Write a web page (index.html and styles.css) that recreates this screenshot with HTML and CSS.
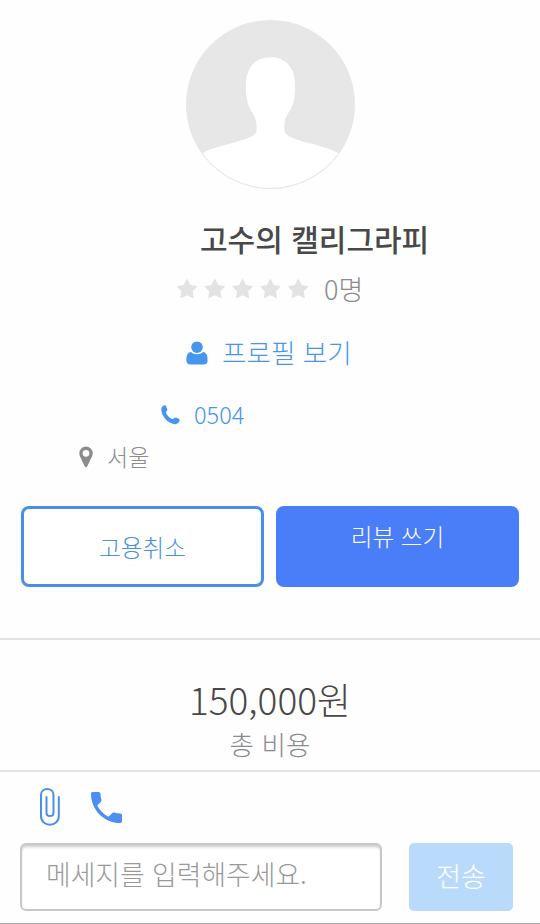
FILE: index.html
```html
<!DOCTYPE html>
<html lang="ko">
<head>
    <meta charset="UTF-8">
    <title>고수의 캘리그라피</title>
    <link rel="stylesheet" href="styles.css">
</head>
<body>
    <section class="profile">
        <svg class="avatar" viewBox="0 0 168 168">
            <circle cx="84" cy="84" r="84" fill="#e7e7e7"/>
            <path d="M16.500 132.500C31 123 66 121 70 111C71 102 69 97 66 92C61 85 59.500 76 59.500 65C59.500 47 69 37 84 37C99 37 108.500 47 108.500 65C108.500 76 107 85 102 92C99 97 97 102 98 111C102 121 137 123 151.500 132.500A83.500 83.500 0 0 1 16.500 132.500Z" fill="#fff"/>
        </svg>
        <h1 class="name">고수의 캘리그라피</h1>
        <div class="rating">
            <svg class="stars" viewBox="0 0 134 22" fill="#e3e3e3">
                <defs>
                    <path id="star" d="M11 0.500L14.500 7L21.500 8.200L16.600 13.300L17.700 20.500L11 17.300L4.300 20.500L5.400 13.300L0.500 8.200L7.500 7Z"/>
                </defs>
                <use href="#star"/>
                <use href="#star" x="27.800"/>
                <use href="#star" x="55.600"/>
                <use href="#star" x="83.400"/>
                <use href="#star" x="111.200"/>
            </svg>
            <span>0명</span>
        </div>
        <a class="link view">
            <svg width="22" height="24" viewBox="0 0 22 24" fill="#4796ee">
                <circle cx="11" cy="6.200" r="5.800"/>
                <path d="M5 11C8 13.900 14 13.900 17 11C20.500 11.400 21.600 14.500 21.600 19.500C21.600 22 20 23.500 17.500 23.500H4.500C2 23.500 0.400 22 0.400 19.500C0.400 14.500 1.500 11.400 5 11Z"/>
            </svg>
            <span>프로필 보기</span>
        </a>
        <a class="link phone">
            <svg width="19" height="20" viewBox="0 0 19 20" fill="#4796ee">
                <path d="M0.300 4C0.500 1.500 2.500 0 4.500 0.200C5.200 1.500 6.300 3.500 6.300 4.800C6.300 6.100 4.800 6.500 5 7.700C6 10.200 8.500 12.900 11.200 13.900C12.500 14.100 13 12.400 14.500 12.400C15.700 12.600 18 13.800 18.700 14.600C18.700 17 17 18.900 14.800 19.200C7.500 19.500 0 11 0.300 4Z"/>
            </svg>
            <span>0504</span>
        </a>
        <div class="place">
            <svg width="14" height="22" viewBox="0 0 14 22">
                <path d="M7 0.500A6.700 6.700 0 0 0 0.300 7.200C0.300 9.500 1.400 11 2 12.500L5.700 20.200Q7 22.500 8.300 20.200L12 12.500C12.600 11 13.700 9.500 13.700 7.200A6.700 6.700 0 0 0 7 0.500ZM7 3.900A3.400 3.400 0 1 1 7 10.700A3.400 3.400 0 0 1 7 3.900Z" fill="#8c8c8c"/>
            </svg>
            <span>서울</span>
        </div>
        <div class="actions">
            <button class="btn cancel">고용취소</button>
            <button class="btn review">리뷰 쓰기</button>
        </div>
    </section>

    <section class="cost">
        <div class="price">150,000원</div>
        <div class="caption">총 비용</div>
    </section>

    <footer class="chat">
        <div class="tools">
            <svg width="20" height="38" viewBox="0 0 20 38" fill="none" stroke="#4b8fe8" stroke-width="2" stroke-linecap="round">
                <path d="M6.500 9V24.500C6.500 29.300 13.500 29.300 13.500 24.500V7C13.500 -0.900 1 -0.900 1 7V28C1 39.500 18.800 39.500 18.800 28V9"/>
            </svg>
            <svg width="31" height="31" viewBox="3 3 18 18" fill="#4b8ff2">
                <path d="M6.620 10.790c1.440 2.830 3.760 5.140 6.590 6.590l2.200-2.200c.27-.27.67-.36 1.020-.24 1.120.37 2.330.57 3.570.57.55 0 1 .45 1 1V20c0 .55-.45 1-1 1-9.390 0-17-7.610-17-17 0-.55.45-1 1-1h3.500c.55 0 1 .45 1 1 0 1.250.2 2.450.57 3.570.11.35.03.74-.25 1.020l-2.200 2.200z"/>
            </svg>
        </div>
        <div class="compose">
            <input class="message" type="text" placeholder="메세지를 입력해주세요.">
            <button class="send">전송</button>
        </div>
    </footer>
</body>
</html>
```
FILE: styles.css
```css
* {
    box-sizing: border-box;
}

body {
    margin: 0;
    height: 924px;
    display: flex;
    flex-direction: column;
    overflow: hidden;
    background-color: #fefefe;
    color: #484848;
    font-family: "Noto Sans CJK KR", sans-serif;
    font-weight: 300;
}

button, input {
    font-family: inherit;
    font-weight: inherit;
}

svg {
    display: block;
    flex-shrink: 0;
}

.profile {
    height: 638px;
    padding: 20px 21px 0;
    display: flex;
    flex-direction: column;
}

.avatar {
    width: 169px;
    height: 169px;
    margin: 0 auto;
}

.name {
    margin: 27px 0 0 179px;
    font-size: 30px;
    font-weight: 500;
    line-height: 44px;
}

.rating {
    display: flex;
    align-items: center;
    gap: 14px;
    height: 40px;
    margin: 9px 0 0 155px;
    font-size: 27px;
    line-height: 40px;
    color: #8c8c8c;
}

.stars {
    width: 134px;
    height: 22px;
}

.link {
    display: flex;
    align-items: center;
    color: #4796ee;
}

.view {
    gap: 14px;
    height: 40px;
    margin: 24px 0 0 165px;
    font-size: 26.600px;
    line-height: 38px;
}

.view span {
    margin-top: -2px;
}

.phone {
    gap: 14px;
    height: 36px;
    margin: 24px 0 0 140px;
    font-size: 23.500px;
}

.phone span,
.place span {
    margin-top: -2px;
}

.place {
    display: flex;
    align-items: center;
    gap: 14px;
    height: 36px;
    margin: 6px 0 0 58px;
    font-size: 23px;
    color: #8c8c8c;
}

.actions {
    display: grid;
    grid-template-columns: 1fr 1fr;
    gap: 12px;
    margin-top: 31px;
}

.btn {
    height: 81px;
    padding: 0;
    border-radius: 8px;
    font-size: 23.600px;
}

.cancel {
    border: 3px solid #4690e6;
    background-color: #fff;
    color: #4690e6;
}

.review {
    padding: 0 0 22px;
    border: none;
    background-color: #4a7df8;
    color: #fff;
}

.cost {
    height: 132px;
    padding-top: 33px;
    border-top: 2px solid #e3e3e3;
    text-align: center;
}

.price {
    font-size: 37px;
    line-height: 52px;
}

.caption {
    font-size: 26.600px;
    line-height: 37px;
    color: #8c8c8c;
}

.chat {
    height: 154px;
    padding: 16px 27px 0 20px;
    border-top: 2px solid #e3e3e3;
    border-bottom: 1px solid #aaa;
}

.tools {
    display: flex;
    align-items: center;
    gap: 31px;
    height: 38px;
    padding-left: 20px;
}

.compose {
    display: flex;
    gap: 27px;
    margin-top: 17px;
}

.message {
    width: 362px;
    height: 68px;
    padding: 0 24px 8px;
    border: 2px solid #c8c8c8;
    border-radius: 6px;
    background-color: #fff;
    box-shadow: inset 0 3px 3px -1px #ccc;
    font-size: 26.800px;
}

.message::placeholder {
    color: #999;
}

.send {
    flex: 1;
    height: 68px;
    padding: 0 0 3px;
    border: none;
    border-radius: 5px;
    background-color: #b9dafb;
    color: #fff;
    font-size: 27px;
}
```
